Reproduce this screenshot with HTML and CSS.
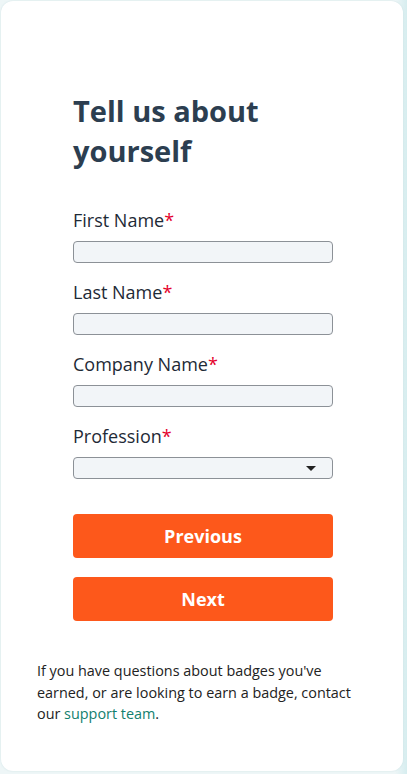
FILE: index.html
```html
<!DOCTYPE html>
<html lang="en">
<head>
<meta charset="utf-8">
<title>Tell us about yourself</title>
<link rel="stylesheet" href="styles.css">
</head>
<body>
<div class="card">
  <form class="form">
    <h1 class="title">Tell us about yourself</h1>
    <div class="field">
      <label class="label">First Name<span class="req">*</span></label>
      <input class="input" type="text">
    </div>
    <div class="field">
      <label class="label">Last Name<span class="req">*</span></label>
      <input class="input" type="text">
    </div>
    <div class="field">
      <label class="label">Company Name<span class="req">*</span></label>
      <input class="input" type="text">
    </div>
    <div class="field">
      <label class="label">Profession<span class="req">*</span></label>
      <div class="select-wrap">
        <select class="input select"><option></option></select>
      </div>
    </div>
    <div class="actions">
      <button type="button" class="btn">Previous</button>
      <button type="button" class="btn">Next</button>
    </div>
  </form>
  <p class="note">If you have questions about badges you've earned, or are looking to earn a badge, contact our <a class="link" href="#">support team</a>.</p>
</div>
</body>
</html>
```
FILE: styles.css
```css
html, body {
  margin: 0;
  padding: 0;
}
body {
  background: linear-gradient(90deg, #eef6f7 0%, #eef6f7 97%, #d6edef 100%);
  font-family: "Open Sans", "Noto Sans", sans-serif;
  padding: 1px 4px 3px 1px;
}
.card {
  background: #ffffff;
  border-radius: 12px;
  height: 770px;
  padding: 0 36px;
  box-sizing: border-box;
  box-shadow: 0 0 2px rgba(160, 200, 205, 0.4);
  display: flow-root;
}
.form {
  width: 260px;
  margin-left: 36px;
  padding-top: 90px;
}
.title {
  margin: 0 0 37px 0;
  font-size: 29px;
  line-height: 40px;
  font-weight: 700;
  color: #2c3e50;
}
.field {
  display: flex;
  flex-direction: column;
  margin-bottom: 17px;
}
.label {
  font-size: 18px;
  line-height: 24px;
  color: #1e2a36;
  margin-bottom: 9px;
}
.req {
  color: #e4002b;
}
.input {
  display: block;
  width: 100%;
  height: 22px;
  box-sizing: border-box;
  margin: 0;
  border: 1px solid #8c9197;
  border-radius: 4px;
  background: #f2f5f8;
  font-family: inherit;
  font-size: 14px;
}
.select-wrap {
  position: relative;
}
.select {
  appearance: none;
  -webkit-appearance: none;
  padding: 0 6px;
}
.select-wrap::after {
  content: "";
  position: absolute;
  right: 17px;
  top: 9px;
  width: 0;
  height: 0;
  border-left: 5px solid transparent;
  border-right: 5px solid transparent;
  border-top: 5px solid #222;
  pointer-events: none;
}
.actions {
  display: flex;
  flex-direction: column;
  gap: 19px;
  margin-top: 35px;
}
.btn {
  height: 44px;
  border: 0;
  border-radius: 4px;
  background: #fd581b;
  color: #ffffff;
  font-family: inherit;
  font-size: 18px;
  font-weight: 700;
}
.note {
  margin: 39px 0 0 0;
  font-size: 14.4px;
  line-height: 21.6px;
  color: #222222;
}
.link {
  color: #12806e;
  text-decoration: none;
}
```
